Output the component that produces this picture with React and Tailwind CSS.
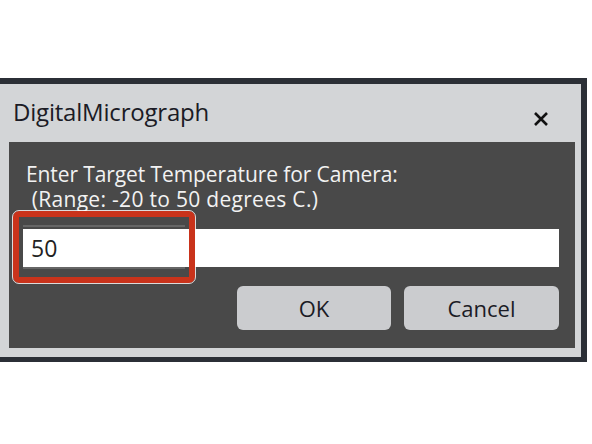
export default function App() {
  return (
    <div className="w-[592px] h-[444px] bg-white overflow-hidden relative" style={{ fontFamily: '"Open Sans", "Noto Sans", sans-serif' }}>
      <div className="mt-[78px] w-[587px] border-t-[6px] border-r-[6px] border-b-[5px] border-[#2b2f36] bg-[#d3d5d7] pb-[9px]">
        {/* title bar */}
        <div className="h-[58px] flex items-center justify-between pl-[13px] pr-[32px]">
          <span className="text-[24px] text-[#1b1b25] tracking-[-0.2px] mt-[-2px]">DigitalMicrograph</span>
          <svg width="16" height="16" viewBox="0 0 16 16" className="mt-[11px]">
            <path d="M2 2 L14 14 M14 2 L2 14" stroke="#111" strokeWidth="2.6" />
          </svg>
        </div>
        {/* body */}
        <div className="ml-[9px] mr-[6px] bg-[#494949] pt-[20px] pb-[18px] pl-[14px] pr-[16px]">
          <div className="pl-[3px] text-[21px] leading-[25px] text-[#f2f2f2] tracking-[-0.1px]">
            <div>Enter Target Temperature for Camera:</div>
            <div className="tracking-[0.3px]">&nbsp;(Range: -20 to 50 degrees C.)</div>
          </div>
          <div className="mt-[17px] h-[38px] bg-white flex items-center pl-[8px] text-[23px] text-[#222]">
            <span className="relative z-10">50</span>
          </div>
          <div className="mt-[19px] flex justify-end gap-[13px]">
            <button className="w-[154px] h-[44px] rounded-[6px] bg-[#cbcccf] text-[22px] text-[#1b1b25]">OK</button>
            <button className="w-[155px] h-[44px] rounded-[6px] bg-[#cbcccf] text-[22px] text-[#1b1b25]">Cancel</button>
          </div>
        </div>
      </div>
      {/* red highlight annotation */}
      <div className="absolute left-[13px] top-[211px] w-[182px] h-[72px] rounded-[6px] border-[6px] border-[#c9331b] outline outline-1 outline-white/80">
        <div className="absolute left-[4px] right-[4px] top-[8px] h-[2px] bg-[#666]" />
        <div className="absolute left-[4px] right-[4px] bottom-[8px] h-[2px] bg-[#666]" />
      </div>
    </div>
  )
}
